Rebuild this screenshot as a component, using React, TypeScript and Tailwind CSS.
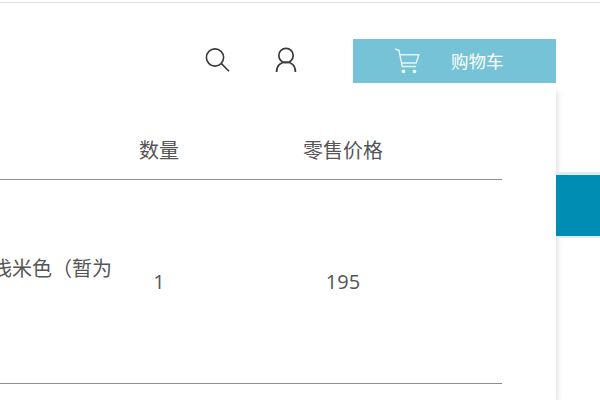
export default function App() {
  return (
    <div className="flex h-[400px] w-[600px] flex-col overflow-hidden bg-white font-['Open_Sans','Noto_Sans_CJK_SC',sans-serif] text-[#555]">
      <div className="mt-[2px] h-px shrink-0 bg-[#e0e0e0]" />
      <div className="flex flex-1">
        <div className="flex w-[556px] shrink-0 flex-col">
          <header className="flex h-[80px] shrink-0 items-end justify-end">
            <div className="mb-[10px] mr-[55px] flex items-center gap-[44px]">
              <svg width="26" height="26" viewBox="0 0 26 26" fill="none" stroke="#3a3a3a" strokeWidth="1.6">
                <circle cx="11" cy="10.5" r="8.6" />
                <path d="M17.4 16.6 L25 24.2" />
              </svg>
              <svg width="24" height="26" viewBox="0 0 24 26" fill="none" stroke="#3a3a3a" strokeWidth="1.7">
                <circle cx="12" cy="8.5" r="7.2" />
                <path d="M2.6 25 C2.6 18.6 6.4 15.2 12 15.2 C17.6 15.2 21.4 18.6 21.4 25" />
              </svg>
            </div>
            <button className="flex h-[44px] w-[203px] shrink-0 items-center bg-[#76c3d7] pl-[41px] text-[17.5px] text-white">
              <svg width="26" height="28" viewBox="0 0 26 28" fill="none" stroke="#ffffff" strokeOpacity="0.8" strokeWidth="1.4" className="shrink-0">
                <path d="M1 2 L5 3.4 L8.2 19.5 L22 19.5" />
                <path d="M5.8 7.8 L24.8 7.8 L22.2 16 L7.4 16" />
                <circle cx="9.5" cy="24.4" r="1.2" fill="#ffffff" />
                <circle cx="20.5" cy="24.4" r="1.2" fill="#ffffff" />
              </svg>
              <span className="ml-[31px]">购物车</span>
            </button>
          </header>
          <main className="flex-1 pr-[54px] text-[20px] leading-[28px] shadow-[5px_6px_5px_-3px_rgba(0,0,0,0.12)]">
            <div className="flex h-[97px] items-end border-b border-[#8e8e8e] pb-[14px]">
              <div className="w-[112px]" />
              <div className="w-[94px] text-center">数量</div>
              <div className="w-[274px] text-center">零售价格</div>
            </div>
            <div className="flex h-[204px] items-start border-b border-[#8e8e8e]">
              <div className="mt-[75px] w-[112px] overflow-hidden whitespace-nowrap">
                <div className="ml-[-8px]">浅米色（暂为</div>
              </div>
              <div className="mt-[88px] w-[94px] text-center">1</div>
              <div className="mt-[88px] w-[274px] text-center">195</div>
            </div>
          </main>
        </div>
        <aside className="mt-[169px] flex-1">
          <div className="h-[66px] border-y-[3px] border-b-[2px] border-[#e4e9eb] bg-[#008db4]" />
        </aside>
      </div>
    </div>
  );
}
